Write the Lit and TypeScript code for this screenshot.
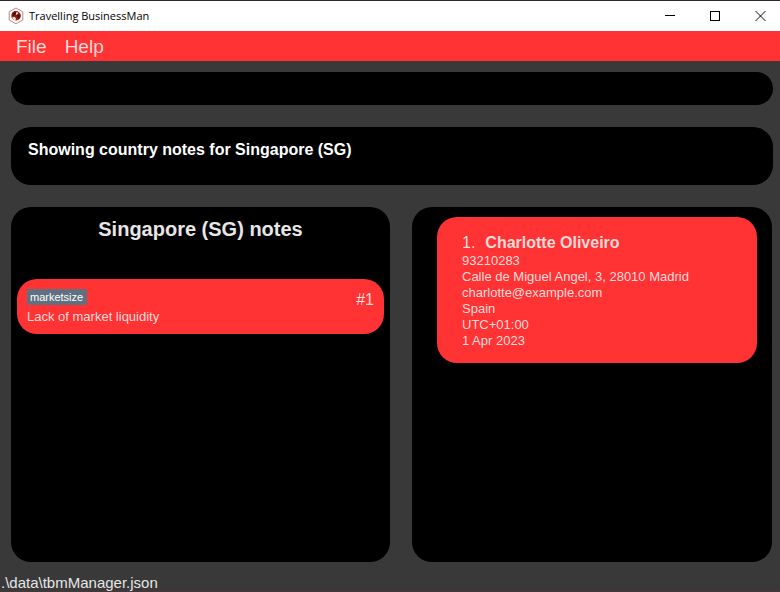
import { LitElement, html, css, svg } from "lit";
import { customElement, property } from "lit/decorators.js";

interface Note {
  tag: string;
  text: string;
}

interface Contact {
  name: string;
  details: string[];
}

const appIcon = svg`
  <svg class="logo" viewBox="0 0 16 18" aria-hidden="true">
    <path d="M8 1 14.8 4.8V13L8 16.9 1.2 13V4.8Z" fill="#fff" stroke="#c08a80" stroke-width="1" />
    <circle cx="8" cy="8.8" r="4.7" fill="#8a2218" />
    <path d="M3.8 7C4.6 5.2 6 4.2 7.8 4.2L8 6.6 5.6 9.4Z" fill="#5e0f09" />
    <path d="M9.2 7.2 12.4 7.6C12.8 9.6 12 11.4 10.6 12.4L8.8 9.6Z" fill="#5e0f09" />
    <path d="M4.2 10.6 6.4 9.8 8 11.4 7.4 13.4C5.8 13.2 4.8 12.2 4.2 10.6Z" fill="#f5e0dc" />
    <path d="M8.2 5.2 10.2 5.6 9.6 7.2 8 7.8Z" fill="#f5e0dc" />
  </svg>`;

@customElement("title-bar")
export class TitleBar extends LitElement {
  static styles = css`
    :host {
      display: flex;
      align-items: center;
      height: 30px;
      border-top: 1px solid #2b2b2b;
      background: #fff;
      color: #000;
      font: 11px/16px "Open Sans", "Noto Sans", sans-serif;
    }
    .logo {
      width: 16px;
      height: 18px;
      margin: 0 5px 0 8px;
    }
    .title {
      flex: 1;
      margin: 0;
      font: inherit;
    }
    .control {
      display: grid;
      place-items: center;
      width: 45px;
      height: 30px;
      padding: 0;
      border: 0;
      background: none;
    }
    .control:last-child {
      margin-right: -3px;
    }
    .glyph {
      width: 11px;
      height: 11px;
      fill: none;
      stroke: #000;
    }
  `;

  render() {
    return html`
      ${appIcon}
      <h1 class="title">Travelling BusinessMan</h1>
      <button class="control" aria-label="Minimize">
        <svg class="glyph" viewBox="0 0 11 11"><path d="M0 4.5H10" /></svg>
      </button>
      <button class="control" aria-label="Maximize">
        <svg class="glyph" viewBox="0 0 11 11"><rect x=".5" y=".5" width="9" height="9" /></svg>
      </button>
      <button class="control" aria-label="Close">
        <svg class="glyph" viewBox="0 0 11 11"><path d="M.5 0 10.5 10M10.5 0 .5 10" /></svg>
      </button>
    `;
  }
}

@customElement("note-card")
export class NoteCard extends LitElement {
  @property({ attribute: false }) note!: Note;
  @property({ type: Number }) index = 1;

  static styles = css`
    :host {
      display: flex;
      justify-content: space-between;
      padding: 10px 10px 8px;
      border-radius: 20px;
      background: #ff3333;
      color: #ffdada;
    }
    .tag {
      display: inline-block;
      padding: 1px 4px 1px 3px;
      border-radius: 2px;
      background: #5f7081;
      color: #fff;
      font-size: 11px;
      line-height: 14px;
    }
    .text {
      margin: 3px 0 0;
      font-size: 13px;
      line-height: 18px;
    }
    .index {
      font-size: 16px;
      line-height: 22px;
    }
    .body {
      display: flex;
      flex-direction: column;
      align-items: flex-start;
    }
  `;

  render() {
    return html`
      <div class="body">
        <span class="tag">${this.note.tag}</span>
        <p class="text">${this.note.text}</p>
      </div>
      <span class="index">#${this.index}</span>
    `;
  }
}

@customElement("contact-card")
export class ContactCard extends LitElement {
  @property({ attribute: false }) contact!: Contact;
  @property({ type: Number }) index = 1;

  static styles = css`
    :host {
      display: block;
      padding: 16px 25px 14px;
      border-radius: 20px;
      background: #ff3333;
      color: #ffdada;
      font-size: 13px;
      line-height: 16px;
    }
    .name {
      display: flex;
      gap: 10px;
      margin: 0;
      font-size: 16px;
      line-height: 20px;
    }
    .number {
      font-weight: 400;
    }
    .detail {
      margin: 0;
    }
  `;

  render() {
    return html`
      <h3 class="name"><span class="number">${this.index}.</span>${this.contact.name}</h3>
      ${this.contact.details.map((d) => html`<p class="detail">${d}</p>`)}
    `;
  }
}

@customElement("app-root")
export class AppRoot extends LitElement {
  private notes: Note[] = [{ tag: "marketsize", text: "Lack of market liquidity" }];

  private contacts: Contact[] = [
    {
      name: "Charlotte Oliveiro",
      details: [
        "93210283",
        "Calle de Miguel Angel, 3, 28010 Madrid",
        "charlotte@example.com",
        "Spain",
        "UTC+01:00",
        "1 Apr 2023",
      ],
    },
  ];

  static styles = css`
    :host {
      display: flex;
      flex-direction: column;
      min-height: 100vh;
      background: #393939;
      font-family: "Liberation Sans", Arial, sans-serif;
    }
    .menu {
      display: flex;
      gap: 18px;
      padding: 1px 16px 0;
      background: #ff3333;
    }
    .menu-item {
      padding: 0;
      border: 0;
      background: none;
      color: #ffdada;
      font: inherit;
      font-size: 19px;
      line-height: 29px;
    }
    .content {
      flex: 1;
      display: flex;
      flex-direction: column;
      gap: 22px;
      padding: 11px 7px 11px 11px;
    }
    .command {
      box-sizing: border-box;
      width: 100%;
      height: 33px;
      padding: 0 16px;
      border: 0;
      border-radius: 20px;
      outline: 0;
      background: #000;
      color: #fff;
      font: inherit;
    }
    .result {
      display: block;
      padding: 13px 17px 25px;
      border-radius: 20px;
      background: #000;
      color: #fff;
      font-size: 16px;
      font-weight: 700;
      line-height: 20px;
    }
    .panes {
      flex: 1;
      display: grid;
      grid-template-columns: 379fr 360fr;
      gap: 22px;
      padding-right: 1px;
    }
    .pane {
      border-radius: 20px;
      background: #000;
    }
    .notes {
      padding: 10px 6px;
    }
    .contacts {
      padding: 10px 15px 10px 25px;
    }
    .heading {
      margin: 0 0 38px;
      color: #e6e6e6;
      font-size: 20px;
      line-height: 24px;
      text-align: center;
    }
    .status {
      padding: 1px 1px 0;
      border-bottom: 1px solid #4a3539;
      color: #e6e6e6;
      font-size: 15px;
      line-height: 17px;
    }
  `;

  render() {
    return html`
      <title-bar></title-bar>
      <nav class="menu">
        <button class="menu-item">File</button>
        <button class="menu-item">Help</button>
      </nav>
      <main class="content">
        <input class="command" type="text" aria-label="Command" />
        <output class="result">Showing country notes for Singapore (SG)</output>
        <div class="panes">
          <section class="pane notes">
            <h2 class="heading">Singapore (SG) notes</h2>
            ${this.notes.map((n, i) => html`<note-card .note=${n} .index=${i + 1}></note-card>`)}
          </section>
          <section class="pane contacts">
            ${this.contacts.map((c, i) => html`<contact-card .contact=${c} .index=${i + 1}></contact-card>`)}
          </section>
        </div>
      </main>
      <footer class="status">.\\data\\tbmManager.json</footer>
    `;
  }
}
